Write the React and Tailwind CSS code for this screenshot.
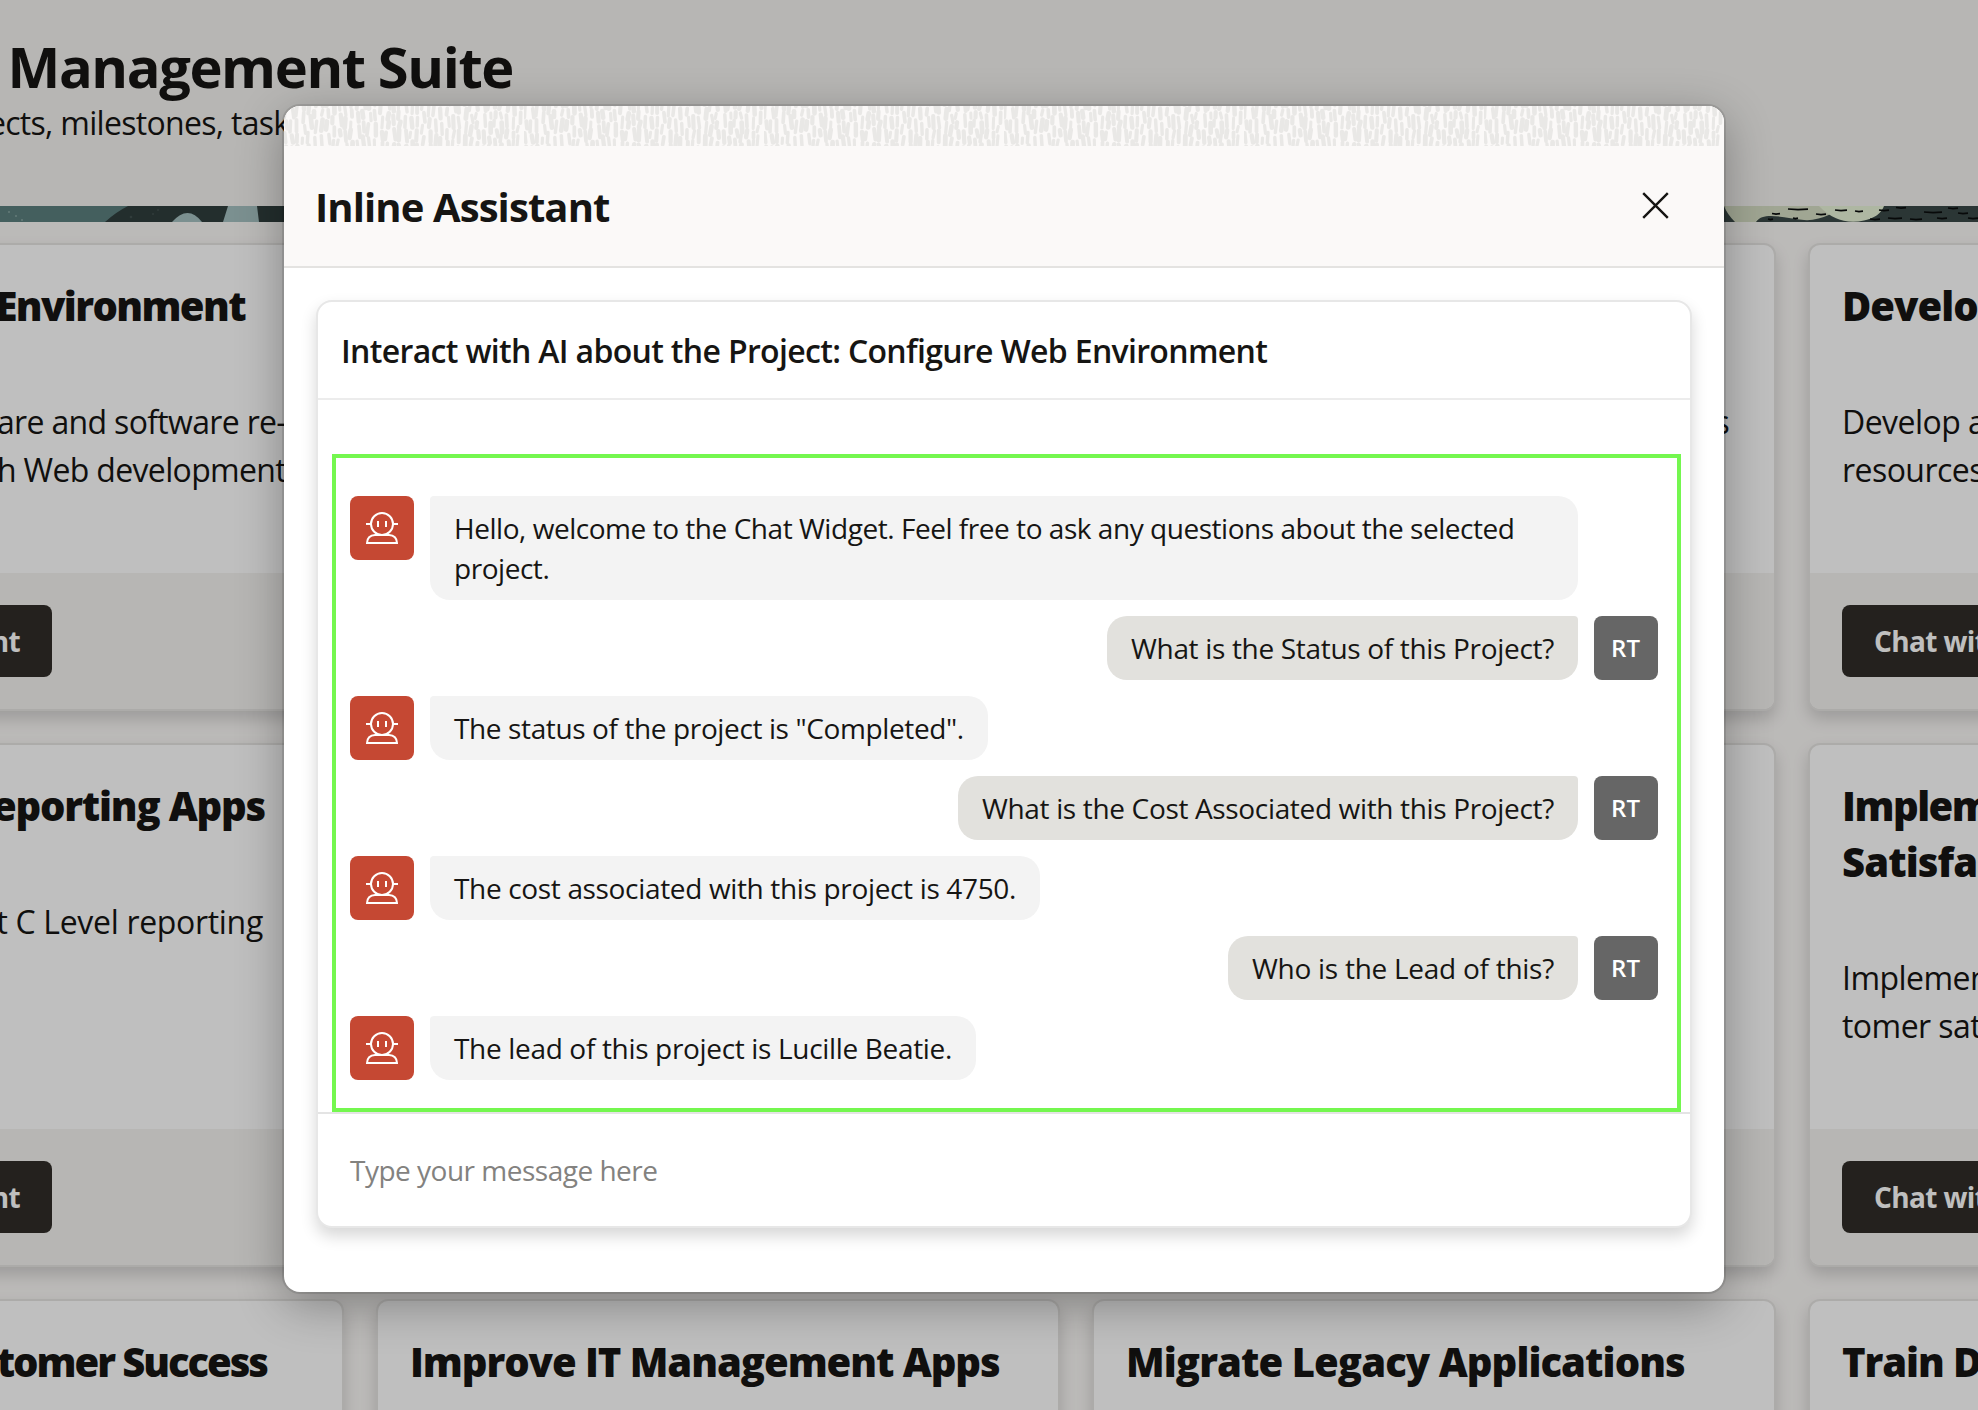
import React from "react";

/* ---------- page behind the dialog ---------- */

const cards = [
  {
    title: "Configure Web Environment",
    titleClass: "text-right pr-[65px] tracking-[-1.6px]",
    lines: ["Configure hardware and software re-", "sources for h Web development"],
    linesClass: "text-right pr-[24px] tracking-[-0.67px]",
  },
  { title: "", lines: [] },
  {
    title: "",
    lines: ["Deploy the collaboration services"],
    linesClass: "text-right pr-[13px] tracking-[-0.8px]",
  },
  {
    title: "Develop Mobile Apps",
    titleClass: "tracking-[-1px]",
    lines: ["Develop a mobile app and", "resources for teams"],
    linesClass: "tracking-[-0.55px]",
  },
  {
    title: "Develop Reporting Apps",
    titleClass: "text-right pr-[45px] tracking-[-1.2px]",
    lines: ["Support C Level reporting"],
    linesClass: "text-right pr-[47px] tracking-[-0.32px]",
  },
  { title: "", lines: [] },
  { title: "", lines: [] },
  {
    title: (
      <>
        <span className="tracking-[-1.5px]">Implement</span>
        <br />
        Satisfaction Survey
      </>
    ),
    titleClass: "tracking-[-0.9px]",
    lines: ["Implement cus-", "tomer satisfaction"],
    linesClass: "tracking-[-0.55px]",
  },
  {
    title: "Improve Customer Success",
    titleClass: "text-right pr-[43px] tracking-[-2.05px]",
    lines: [],
  },
  { title: "Improve IT Management Apps", titleClass: "tracking-[-1.06px]", lines: [] },
  { title: "Migrate Legacy Applications", titleClass: "tracking-[-0.93px]", lines: [] },
  { title: "Train Developers", titleClass: "tracking-[-1.1px]", lines: [] },
];

function ProjectCard({ card }) {
  return (
    <article className="flex flex-col overflow-hidden rounded-[12px] border-2 border-[#e6e4e2] bg-white shadow-[0_8px_16px_rgba(0,0,0,0.16)]">
      <div className="flex-1 px-8 pt-[33px]">
        <h2
          className={`min-h-14 text-[40px] leading-[56px] font-extrabold whitespace-nowrap text-[#161513] ${card.titleClass || ""}`}
        >
          {card.title}
        </h2>
        <div
          className={`pt-16 text-[32px] leading-[48px] whitespace-nowrap text-[#161513] ${card.linesClass || ""}`}
        >
          {card.lines.map((l) => (
            <p key={l}>{l}</p>
          ))}
        </div>
      </div>
      <footer className="h-[136px] shrink-0 bg-[#f5f3f0] px-8 pt-8">
        <button className="h-[72px] w-[358px] rounded-[8px] bg-[#302d28] text-[28px] font-bold tracking-[-0.64px] whitespace-nowrap text-white">
          Chat with AI Assistant
        </button>
      </footer>
    </article>
  );
}

const dashes = [
  [70, 3, 20], [54, 7.5, 8], [98, 8, 10], [117, 4, 12], [137, 5, 8], [161, 4, 10],
  [50, 13, 5], [75, 12, 5], [152, 13, 10], [170, 12, 14], [192, 13, 12], [206, 6, 18],
  [219, 12, 10], [240, 7, 10], [250, 12, 10], [178, 1.5, 10], [230, 2, 10],
];

function Band() {
  return (
    <div className="flex h-4 w-full justify-between bg-[#2f3e3d]">
      <svg width="300" height="16" viewBox="0 0 300 16">
        <path d="M0 0H128Q116 6 105 16H0Z" fill="#5b7f7e" />
        <path d="M172 16Q188-2 202 16Z" fill="#a4c0c0" />
        <path d="M228 0H257L259 16H223Z" fill="#a4c0c0" />
        <g fill="#86a5a3">
          <circle cx="9" cy="6" r="1" />
          <circle cx="16" cy="10" r="1" />
          <circle cx="22" cy="14" r="1" />
        </g>
        <g fill="#42504f">
          <circle cx="131" cy="11" r="1.3" />
          <circle cx="153" cy="8" r="1" />
          <circle cx="158" cy="4" r="1" />
        </g>
      </svg>
      <svg width="260" height="16" viewBox="0 0 260 16">
        <rect width="260" height="16" fill="#3a4847" />
        <path d="M6 0H110L113 8Q98 15 86 14C66 12 45 5 38 16H17Q9 8 6 0Z" fill="#d6dec5" />
        <path d="M101 0H166Q162 11 146 14.5Q120 20 101 0Z" fill="#e9f5d9" />
        <g stroke="#0a0d0d" strokeWidth="1.7">
          {dashes.map(([x, y, w]) => (
            <path key={`${x}-${y}`} d={`M${x} ${y}l${w / 2} .6l${w / 2} -.4`} fill="none" />
          ))}
        </g>
      </svg>
    </div>
  );
}

function Page() {
  return (
    <div className="bg-[#faf8f6]">
      <header className="h-[206px] bg-[#f5f3f0] pt-[34px] text-[#161513]">
        <h1 className="flex w-[513px] justify-end text-[56px] leading-[64px] font-bold tracking-[-1.4px] whitespace-nowrap">
          Project Management Suite
        </h1>
        <p className="mt-[5px] flex w-[304px] justify-end text-[32px] leading-10 tracking-[-0.7px] whitespace-nowrap">
          Manage your projects, milestones, tasks
        </p>
      </header>
      <Band />
      <main className="mt-[21px] -ml-[340px] grid w-max grid-cols-[repeat(4,684px)] grid-rows-[468px_524px_524px] gap-8">
        {cards.map((c, i) => (
          <ProjectCard key={i} card={c} />
        ))}
      </main>
    </div>
  );
}

/* ---------- dialog ---------- */

// Short, slightly slanted brush strokes that repeat over a 240px tile.
const strokes = (() => {
  let seed = 7;
  const rnd = () => {
    seed = (seed * 16807) % 2147483647;
    return seed / 2147483647;
  };
  const out = [];
  for (let x = 0; x < 240; x += 6) {
    let y = -9 * rnd();
    while (y < 42) {
      const h = 5 + rnd() * 7;
      const dx = (rnd() - 0.5) * 3;
      out.push({ x: x + rnd() * 3, y, h, dx, w: 3 + rnd() * 1.8 });
      y += h + 2.5 + rnd() * 2.5;
    }
  }
  return out;
})();

function Texture() {
  return (
    <svg className="block h-10 w-full shrink-0">
      <defs>
        <pattern id="brush" width="240" height="40" patternUnits="userSpaceOnUse">
          <rect width="240" height="40" fill="#fbf9f8" />
          <g stroke="#e9e8e6" strokeLinecap="round" fill="none">
            {strokes.map((s, i) => (
              <path
                key={i}
                strokeWidth={s.w}
                d={`M${s.x.toFixed(1)} ${s.y.toFixed(1)}l${s.dx.toFixed(1)} ${s.h.toFixed(1)}`}
              />
            ))}
          </g>
        </pattern>
      </defs>
      <rect width="100%" height="40" fill="url(#brush)" />
    </svg>
  );
}

function BotIcon() {
  return (
    <svg width="32" height="32" viewBox="0 0 32 32" fill="none" stroke="#fff" strokeWidth="2">
      <circle cx="16" cy="12" r="11" />
      <path d="M0 12H5M27 12H32M12 9V15M20 9V15" />
      <path d="M9 23H23C28 23 31 26.5 31 31H1C1 26.5 4 23 9 23Z" />
    </svg>
  );
}

const messages = [
  { bot: true, text: "Hello, welcome to the Chat Widget. Feel free to ask any questions about the selected project.", cls: "tracking-[-0.46px] w-[1148px]" },
  { text: "What is the Status of this Project?", cls: "tracking-[-0.32px] w-[471px] whitespace-nowrap" },
  { bot: true, text: 'The status of the project is "Completed".', cls: "tracking-[-0.38px] w-[558px] whitespace-nowrap" },
  { text: "What is the Cost Associated with this Project?", cls: "tracking-[-0.34px] w-[620px] whitespace-nowrap" },
  { bot: true, text: "The cost associated with this project is 4750.", cls: "tracking-[-0.34px] w-[610px] whitespace-nowrap" },
  { text: "Who is the Lead of this?", cls: "tracking-[-0.27px] w-[350px] whitespace-nowrap" },
  { bot: true, text: "The lead of this project is Lucille Beatie.", cls: "tracking-[-0.33px] w-[546px] whitespace-nowrap" },
];

function Message({ m }) {
  return m.bot ? (
    <div className="flex items-start gap-4">
      <div className="flex size-16 shrink-0 items-center justify-center rounded-[8px] bg-[#c54833]">
        <BotIcon />
      </div>
      <div className={`rounded-[20px] rounded-tl-[4px] bg-[#f3f3f3] px-6 py-3 text-[28px] leading-10 ${m.cls}`}>
        {m.text}
      </div>
    </div>
  ) : (
    <div className="flex items-start justify-end gap-4">
      <div className={`rounded-[20px] rounded-tr-[4px] bg-[#e2e1dd] px-6 py-3 text-[28px] leading-10 ${m.cls}`}>
        {m.text}
      </div>
      <div className="flex size-16 shrink-0 items-center justify-center rounded-[8px] bg-[#666666] pr-px text-2xl font-semibold text-white">
        RT
      </div>
    </div>
  );
}

function Dialog() {
  return (
    <section className="flex h-[1186px] w-[1440px] flex-col overflow-hidden rounded-[16px] bg-white text-[#161513] shadow-[0_0_0_2px_rgba(0,0,0,0.1),0_12px_48px_rgba(0,0,0,0.32)]">
      <Texture />
      <header className="flex h-[122px] items-center justify-between border-b-2 border-[#e4e3e1] bg-[#fbf9f8] pr-[55px] pl-[31px]">
        <h2 className="pt-0.5 text-[40px] font-bold tracking-[-0.9px]">Inline Assistant</h2>
        <svg className="-mt-0.5" width="27" height="27" viewBox="0 0 27 27" fill="none" stroke="#161513" strokeWidth="2.4">
          <path d="M1.2 1.2L25.8 25.8M25.8 1.2L1.2 25.8" />
        </svg>
      </header>
      <div className="px-8 pt-8">
        <div className="h-[928px] overflow-hidden rounded-[16px] border-2 border-[#e7e7e7] bg-white shadow-[0_8px_16px_rgba(0,0,0,0.16)]">
          <h3 className="flex h-[98px] items-center border-b-2 border-[#ececec] pt-0.5 pl-[23px] text-[32px] font-semibold tracking-[-0.67px]">
            Interact with AI about the Project: Configure Web Environment
          </h3>
          <div className="h-[712px] pt-[54px] pr-[9px] pl-[14px]">
            <div className="flex h-full flex-col gap-4 border-4 border-[#74f74f] pt-[38px] pr-[19px] pl-[14px]">
              {messages.map((m) => (
                <Message key={m.text} m={m} />
              ))}
            </div>
          </div>
          <div className="flex h-[114px] items-center border-t-2 border-[#e4e4e4] pl-8 text-[28px] tracking-[-0.5px] text-[#83827f]">
            Type your message here
          </div>
        </div>
      </div>
    </section>
  );
}

export default function App() {
  return (
    <div className="relative h-[1410px] w-[1978px] overflow-hidden font-['Open_Sans',sans-serif]">
      <Page />
      <div className="absolute inset-0 bg-black/25 pt-[106px] pl-[284px]">
        <Dialog />
      </div>
    </div>
  );
}
